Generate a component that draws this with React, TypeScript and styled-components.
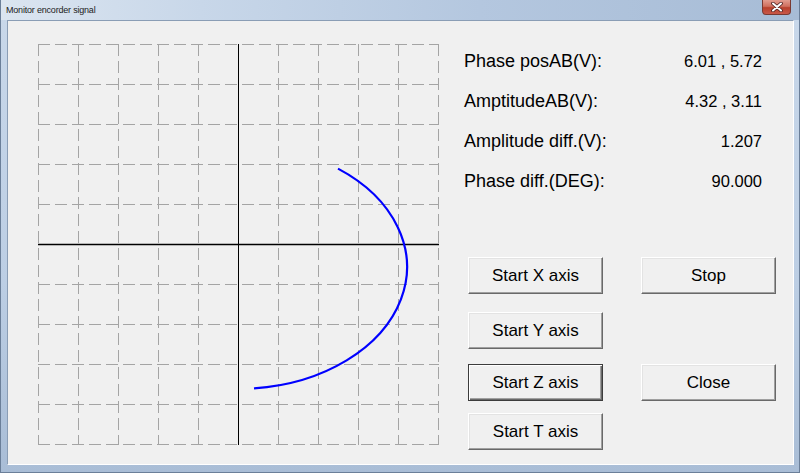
import React from "react";
import styled, { createGlobalStyle } from "styled-components";

const GlobalStyle = createGlobalStyle`
  html, body {
    margin: 0;
    padding: 0;
    background: #f0f0f0;
  }
  body {
    font-family: "Liberation Sans", Arial, sans-serif;
  }
`;

interface Reading {
  label: string;
  value: string;
}

const readings: Reading[] = [
  { label: "Phase posAB(V):", value: "6.01 , 5.72" },
  { label: "AmptitudeAB(V):", value: "4.32 , 3.11" },
  { label: "Amplitude diff.(V):", value: "1.207" },
  { label: "Phase diff.(DEG):", value: "90.000" },
];

const CELL = 40;
const CELLS = 10;

function Scope() {
  const size = CELL * CELLS;
  const lines = Array.from({ length: CELLS + 1 }, (_, i) => i * CELL + 0.5);

  return (
    <PlotSvg width={size + 1} height={size + 1} viewBox={`0 0 ${size + 1} ${size + 1}`}>
      {lines.map((p) => (
        <line key={`v${p}`} x1={p} y1={0} x2={p} y2={size + 1} className="grid" />
      ))}
      {lines.map((p) => (
        <line key={`h${p}`} x1={0} y1={p} x2={size + 1} y2={p} className="grid" />
      ))}
      <line x1={200.5} y1={0} x2={200.5} y2={size + 1} className="axis" />
      <line x1={0} y1={200.5} x2={size + 1} y2={200.5} className="axis wide" />
      <path d="M 300 124.6 A 169 122 0 0 1 216 344.4" className="trace" />
    </PlotSvg>
  );
}

function CloseGlyph() {
  return (
    <svg width="12" height="10" viewBox="0 0 12 10">
      <path d="M2 1.5 L10 8.5 M10 1.5 L2 8.5" stroke="#4a2020" strokeWidth="3.6" strokeLinecap="round" />
      <path d="M2 1.5 L10 8.5 M10 1.5 L2 8.5" stroke="#ffffff" strokeWidth="2" strokeLinecap="round" />
    </svg>
  );
}

export default function App() {
  return (
    <>
      <GlobalStyle />
      <Window>
        <TitleBar>
          <Title>Monitor encorder signal</Title>
          <CloseButton>
            <CloseGlyph />
          </CloseButton>
        </TitleBar>
        <Client>
          <Scope />
          <SidePanel>
            <Readings>
              {readings.map((r) => (
                <ReadingRow key={r.label}>
                  <span>{r.label}</span>
                  <Value>{r.value}</Value>
                </ReadingRow>
              ))}
            </Readings>
            <ButtonRow $top={56}>
              <Button>Start X axis</Button>
              <Button>Stop</Button>
            </ButtonRow>
            <ButtonRow $top={18}>
              <Button>Start Y axis</Button>
            </ButtonRow>
            <ButtonRow $top={15}>
              <Button $default>Start Z axis</Button>
              <Button>Close</Button>
            </ButtonRow>
            <ButtonRow $top={12}>
              <Button>Start T axis</Button>
            </ButtonRow>
          </SidePanel>
        </Client>
      </Window>
    </>
  );
}

const Window = styled.div`
  width: 800px;
  height: 473px;
  box-sizing: border-box;
  display: flex;
  flex-direction: column;
  background: linear-gradient(to bottom, #c9d8ea 0%, #bccee4 60%, #a9bdd6 100%);
  border: 1px solid #6b7f99;
  border-top: none;
  padding: 0 5px 7px 6px;
  overflow: hidden;
`;

const TitleBar = styled.div`
  height: 20px;
  flex: 0 0 20px;
  display: flex;
  align-items: flex-start;
  margin: 0 -5px 0 -6px;
  background: linear-gradient(to right, #dbe5f0 0%, #c8d7e9 25%, #b4c7df 60%, #a7bcd6 100%);
`;

const Title = styled.div`
  padding-left: 5px;
  line-height: 20px;
  font-size: 9px;
  letter-spacing: -0.2px;
  color: #1c1c1c;
`;

const CloseButton = styled.div`
  margin-left: auto;
  margin-right: 8px;
  width: 29px;
  height: 15px;
  box-sizing: border-box;
  border: 1px solid #7a3a33;
  border-top: none;
  border-radius: 0 0 4px 4px;
  background: linear-gradient(to bottom, #e29c8f 0%, #d0705f 45%, #b8402c 55%, #c8584a 100%);
  display: flex;
  align-items: center;
  justify-content: center;
`;

const Client = styled.div`
  flex: 1;
  display: flex;
  align-items: flex-start;
  background: #f0f0f0;
  border: 1px solid;
  border-color: #8a9db5 #ffffff #ffffff #8a9db5;
  padding: 23px 0 0 30px;
`;

const PlotSvg = styled.svg`
  flex: 0 0 auto;
  display: block;

  .grid {
    stroke: #a4a4a4;
    stroke-width: 1;
    stroke-dasharray: 12 5;
  }

  .axis {
    stroke: #000000;
    stroke-width: 1;
  }

  .wide {
    stroke-width: 1.6;
  }

  .trace {
    fill: none;
    stroke: #0000ff;
    stroke-width: 2.2;
  }
`;

const SidePanel = styled.div`
  margin-left: 25px;
  width: 312px;
  flex: 0 0 auto;
  display: flex;
  flex-direction: column;
`;

const Readings = styled.div`
  width: 298px;
  margin-top: -3px;
  display: flex;
  flex-direction: column;
`;

const ReadingRow = styled.div`
  height: 40px;
  display: flex;
  align-items: center;
  justify-content: space-between;
  font-size: 18px;
  color: #000;
`;

const Value = styled.span`
  font-size: 16.5px;
`;

const ButtonRow = styled.div<{ $top: number }>`
  margin-top: ${(p) => p.$top}px;
  padding-left: 4px;
  display: flex;
  gap: 38px;
`;

const Button = styled.button<{ $default?: boolean }>`
  flex: 0 0 135px;
  width: 135px;
  height: 37px;
  box-sizing: border-box;
  padding: 0;
  margin: 0;
  font-family: "Liberation Sans", Arial, sans-serif;
  font-size: 17px;
  color: #000;
  background: #f0f0f0;
  border: 1px solid;
  border-color: ${(p) => (p.$default ? "#3c3c3c" : "#ffffff #696969 #696969 #ffffff")};
  box-shadow: ${(p) =>
    p.$default
      ? "inset 1px 1px #ffffff, inset -1px -1px #696969, inset -2px -2px #a0a0a0"
      : "inset -1px -1px #a0a0a0, inset 1px 1px #e3e3e3"};
  cursor: default;
`;
